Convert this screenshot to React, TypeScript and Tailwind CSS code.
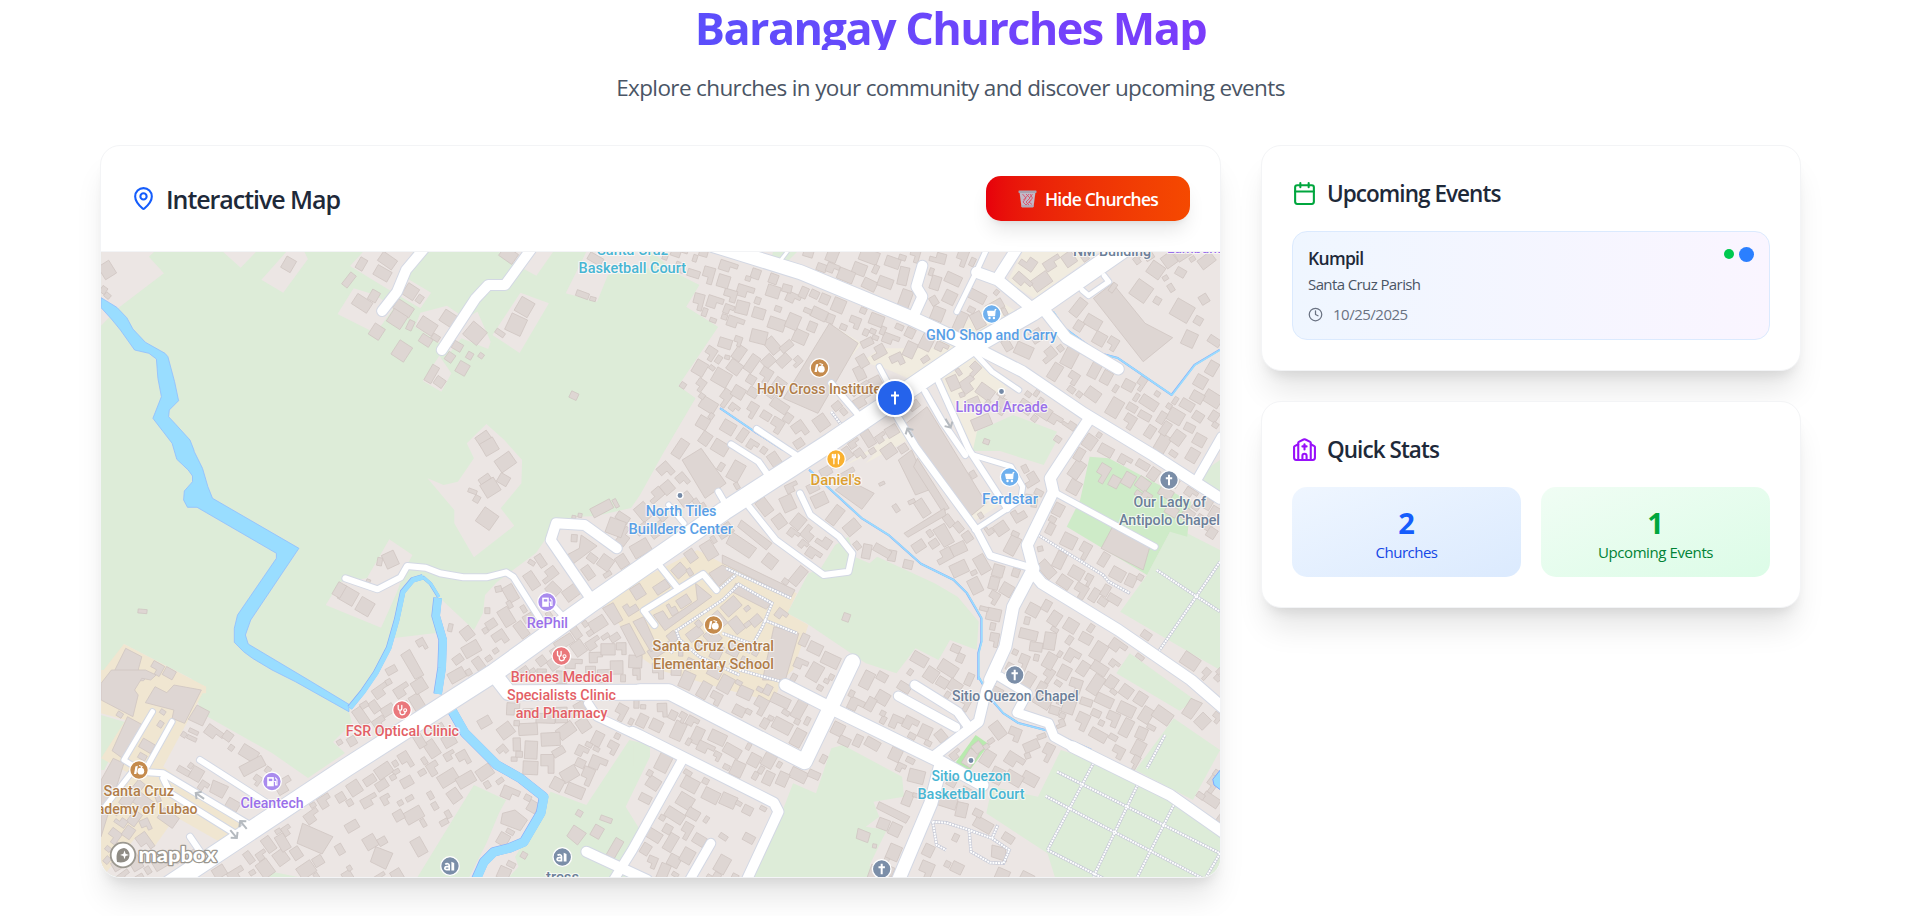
import React from "react";
import { MapPin, Calendar, Clock } from "lucide-react";

type Pt = [number, number];
type Tile = { x: number; y: number; sx: number };

/* Survey sheets: each has an origin and a horizontal scale; the vertical scale is always 3. */
const A: Tile = { x: 90, y: 135, sx: 2.8 };
const B: Tile = { x: 640, y: 135, sx: 2.6133 };
const C: Tile = { x: 90, y: 440, sx: 2.8 };
const D: Tile = { x: 640, y: 440, sx: 2.6133 };
const E: Tile = { x: 90, y: 670, sx: 2.8 };
const F: Tile = { x: 640, y: 670, sx: 2.6133 };
const W: Tile = { x: 0, y: 0, sx: 1 };

const conv = (t: Tile, s: string): Pt[] =>
  s.trim().split(/\s+/).map((p) => {
    const [a, b] = p.split(",").map(Number);
    return t === W ? [a, b] : [t.x + a / t.sx, t.y + b / 3];
  });
const str = (p: Pt[]) => p.map(([x, y]) => x.toFixed(1) + "," + y.toFixed(1)).join(" ");

const mainLand = conv(
  W,
  "560,240 640,240 674,272 699,285 686,307 718,327 678,386 695,398 665,450 640,495 631,508 596,516 574,517 547,537 536,553 513,570 497,582 485,595 483,613 474,630 442,600 436,633 394,638 386,655 372,680 349,712 352,723 333,742 345,753 308,778 272,753 201,713 192,679 124,644 101,700 101,890 1225,890 1225,240"
);

const land: Pt[][] = [
  conv(A, "31,350 180,350 165,365 207,415 80,518 31,572"),
  conv(A, "372,350 422,398 465,350"),
  conv(A, "550,350 600,350 610,372 541,473 480,434"),
  conv(A, "765,350 728,393 830,460 925,520 955,473 880,425 905,350"),
  conv(A, "738,460 693,537 800,595 850,520 800,480"),
  conv(A, "1000,512 925,533 910,575 960,610 1010,650 1040,610 1115,642 1122,620 1085,530 1050,550"),
  conv(A, "1205,473 1285,505 1203,654 1127,600"),
  conv(A, "978,662 1012,715 984,770 932,738"),
  conv(A, "1145,350 1180,382 1250,422 1297,350"),
  conv(A, "1390,350 1568,350 1568,400 1450,420 1420,500 1332,475"),
  conv(C, "1110,-48 1160,0 1210,60 1208,130 1150,205 1188,257 1075,352 1020,250 1020,210 945,115 990,135 1030,125 1075,55 1055,10"),
  conv(C, "838,298 903,345 885,380 860,455 815,563 660,495 700,425 775,415"),
];

const greens: Pt[][] = [
  conv(B, "0,415 90,415 155,450 120,515 203,575 100,752 145,790 65,945 0,945"),
  conv(B, "860,900 975,840 1090,890 1060,948 870,948"),
  conv(B, "350,340 420,340 385,380 345,362"),
  conv(D, "510,315 545,290 560,350 600,370 620,350 770,430 830,470 885,545 880,630 810,600 780,660 720,625 670,700 590,670 435,550 385,520 440,400 470,390"),
  conv(D, "1385,275 1430,280 1516,330 1516,690 1440,640 1255,515 1325,405"),
  conv(D, "1280,640 1450,780 1410,812 1245,700"),
  conv(D, "850,0 1090,0 1055,75"),
  conv(D, "1490,80 1516,60 1516,160 1465,130"),
  conv(E, "1075,345 1165,390 1145,430 1110,520 1060,625 915,625"),
  conv(E, "1290,365 1390,405 1510,210 1568,225 1568,260 1500,410 1540,480 1480,590 1540,625 1170,625 1200,590 1190,560 1220,510 1280,380"),
  conv(E, "510,605 600,625 500,625"),
  conv(E, "31,135 105,158 40,300 31,300"),
  conv(F, "500,235 530,225 685,320 690,380 610,395 625,440 590,470 645,480 600,585 610,625 295,625 380,400 400,340 460,370"),
  conv(F, "1100,240 1180,270 1390,380 1516,490 1516,625 1085,625 1065,550 905,430 920,350 1040,380"),
  conv(F, "1395,145 1516,240 1445,390 1295,300"),
  conv(F, "-18,225 10,225 10,290 -18,310"),
];
const park = conv(D, "1175,50 1225,55 1440,185 1430,290 1385,275 1325,405 1115,260 1150,180");
const court = conv(F, "877,195 912,223 862,300 820,285");

const sand: Pt[][] = [
  conv(C, "95,612 285,718 325,740 325,760 31,760 31,700"),
  conv(E, "31,0 200,0 325,50 205,290 430,470 370,520 240,440 180,530 130,500 31,625 31,400 110,310 31,265 100,150 31,130"),
  conv(D, "-90,490 0,420 150,330 215,370 410,460 385,520 440,555 400,690 370,720 350,785 230,750 50,690 0,650"),
];
const cream: Pt[][] = [
  conv(B, "1000,350 1200,350 1030,490 960,440"),
  conv(B, "630,640 800,640 720,740 640,700 580,680"),
  conv(B, "500,570 580,625 500,740 485,730 565,630"),
  conv(B, "930,490 985,530 760,680 740,660"),
  conv(D, "530,80 690,-40 700,0 590,70 620,30"),
  conv(D, "850,230 950,160 960,180 870,245"),
  conv(B, "790,730 870,660 960,760 900,790 870,945 850,945"),
];

const river: Pt[] = [
  ...conv(A, "31,488 75,517 103,548 120,582 155,622 210,655 218,665 237,740 248,797 222,825 220,845 240,868 280,915 291,945"),
  ...conv(C, "292,35 315,85 330,140 343,175 585,325 450,540 435,585 443,612 612,720"),
  ...conv(E, "725,103 725,125 575,35 510,0"),
  ...conv(C, "455,655 430,635 404,607 404,565 413,525 522,355 522,340 300,202 273,202 262,180 264,153 287,125 287,108 275,90 243,58 230,10"),
  ...conv(A, "230,925 205,890 176,850 200,785 190,730 186,672 165,655 125,645 85,585 60,552 31,518"),
];
const streams: [number, Pt[]][] = [
  [5, conv(W, "350,708 363,692 376,673 389,648 397,620 403,592 413,580 423,577")],
  [3, conv(W, "423,577 431,584 439,597")],
  [8, conv(W, "438,598 436,616 443,640 442,668 438,694")],
  [9, conv(W, "449,705 465,733 497,765 520,778 544,797 541,813 524,842 510,848 494,852 484,862 476,880")],
  [1.6, conv(D, "443,90 580,235 650,285 735,372 820,420 855,460 893,535 893,605 885,640 885,720")],
  [1.6, conv(F, "885,20 920,90 950,130 990,160 1065,182 1180,240")],
  [1.6, conv(B, "210,820 300,890 375,945")],
  [1.6, conv(B, "1080,530 1110,580 1200,655 1250,670 1390,780 1450,690 1516,645")],
];

const roads: [number, Pt[]][] = [
  [10, conv(A, "940,335 885,405 860,470 818,528")],
  [10, conv(A, "1240,335 1162,450 1115,450 1080,490 985,645")],
  [14, conv(B, "190,330 420,412 700,545 860,630")],
  [11, conv(B, "880,640 1000,710 1160,835 1340,960 1516,1090")],
  [3, conv(B, "385,350 370,372")],
  [10, conv(B, "738,392 722,455 738,485 712,550")],
  [5, conv(B, "905,345 875,420 828,530")],
  [11, conv(B, "985,340 935,430")],
  [11, conv(B, "880,412 935,435 1030,525")],
  [11, conv(B, "1060,530 1115,610 1250,702")],
  [5, conv(B, "1155,465 1172,482 1225,440 1213,422")],
  [5, conv(B, "875,655 920,710 990,765")],
  [6, conv(B, "780,740 860,945 960,1122")],
  [7, conv(B, "670,840 720,935 880,1185 915,1262 1020,1298")],
  [5, conv(B, "625,695 660,770")],
  [6, conv(B, "745,770 790,860 850,960")],
  [6, conv(B, "500,745 575,845")],
  [6, conv(B, "305,882 410,962")],
  [6, conv(B, "238,928 310,980 340,1030")],
  [11, conv(B, "1175,850 1072,1030 1080,1070 1012,1230 1028,1300")],
  [12, conv(D, "1028,385 975,500 955,620 915,720")],
  [6, conv(D, "1080,155 1345,320")],
  [11, conv(D, "1025,395 1050,430 1250,570 1440,720 1530,810")],
  [9, conv(D, "1520,-10 1455,120")],
  [5, conv(D, "870,45 970,80 1000,140 995,180 875,270")],
  [6, conv(D, "285,200 355,300 480,405 545,395 555,340 520,290 445,225 418,160")],
  [6, conv(D, "205,155 225,195")],
  [5, conv(D, "75,195 115,250")],
  [6, conv(D, "50,375 95,440")],
  [6, conv(D, "200,450 165,402 10,512 38,555")],
  [6, conv(C, "715,415 805,448 870,412 888,378 940,383 980,400 1045,412 1110,412 1165,397 1185,410 1262,540")],
  [10, conv(C, "1475,325 1385,255 1305,250 1290,300 1405,480")],
  [5, conv(C, "1300,500 1330,535")],
  [15, conv(E, "1130,10 1172,68 1568,67 1621,67")],
  [15, conv(F, "0,65 75,65 430,275 495,120 555,-25")],
  [12, conv(F, "380,45 500,115 790,278 895,345")],
  [8, conv(E, "1395,100 1420,140 1568,215")],
  [10, conv(F, "-20,185 0,196 350,398 362,425 275,640")],
  [9, conv(F, "108,275 -20,540 -80,650")],
  [10, conv(E, "1390,545 1560,630")],
  [9, conv(F, "185,520 125,640")],
  [13, conv(F, "785,290 760,400 672,640")],
  [10, conv(F, "765,262 885,155 905,60 930,0")],
  [9, conv(F, "718,45 830,125 855,165")],
  [9, conv(F, "675,78 825,172")],
  [9, conv(F, "940,20 1012,70 985,128 1068,160 1082,200 1130,230 1200,270")],
  [11, conv(F, "1130,230 1200,270 1385,375 1530,492")],
  [5, conv(E, "175,125 95,270 140,300")],
  [5, conv(E, "230,155 160,290")],
  [5, conv(E, "118,305 31,425")],
  [6, conv(E, "140,305 205,310 440,460")],
  [6, conv(E, "205,325 225,370 408,492")],
  [6, conv(E, "308,270 500,402")],
  [6, conv(E, "280,500 315,555")],
  [18, conv(W, "160,891 347,767 494,673 590,604 724,511 831,442 971,347 1032,312 1140,237")],
];

const paths: Pt[][] = [
  conv(D, "225,385 395,475"),
  conv(D, "205,450 250,405"),
  conv(D, "170,515 95,572 105,605 80,640"),
  conv(D, "105,600 155,650 260,705"),
  conv(D, "170,515 218,478 258,433 345,490 320,560 282,640"),
  conv(D, "215,580 300,615 350,620"),
  conv(D, "325,540 410,580"),
  conv(D, "260,690 370,725"),
  conv(D, "1040,285 1210,405 1225,425 1280,460"),
  conv(D, "1350,390 1455,470 1516,515"),
  conv(D, "1516,365 1355,635"),
  conv(F, "765,455 800,458 860,480 920,505 965,540 950,580 915,578 865,545 860,480"),
  conv(F, "765,455 775,525 800,540"),
  conv(F, "920,505 935,465"),
  conv(F, "1090,305 1516,550"),
  conv(F, "1060,378 1470,625"),
  conv(F, "1065,540 1210,625"),
  conv(F, "1185,280 1065,540"),
  conv(F, "1300,345 1185,620"),
  conv(F, "1395,405 1300,620"),
  conv(F, "1516,550 1480,620"),
  conv(F, "1372,195 1325,295"),
  conv(B, "500,830 530,875"),
];

const bigBuildings: Pt[][] = [
  conv(B, "690,870 750,815 905,1105 862,1145"),
  conv(B, "495,565 570,625 465,835 375,790"),
  conv(B, "1185,490 1235,445 1320,565 1392,608 1315,680"),
  conv(D, "1235,260 1335,310 1315,390 1205,325"),
  conv(D, "110,60 160,25 225,130 170,175"),
  conv(D, "675,60 710,30 755,150 720,165"),
  conv(D, "725,55 808,205 790,215 715,80"),
  conv(D, "690,280 795,205 800,225 700,292"),
  conv(D, "765,270 795,250 822,305 795,322"),
  conv(D, "145,430 188,470 65,572 35,525 60,512 75,538 150,480"),
  conv(D, "215,345 405,450 395,472 215,370"),
  conv(D, "250,430 345,485 330,508 240,455"),
  conv(D, "180,400 215,375 250,395 205,440"),
  conv(D, "350,560 415,580 380,720 320,720"),
  conv(D, "510,150 545,120 612,160 580,208"),
  conv(D, "265,240 345,310 330,330 255,260"),
  conv(D, "240,275 305,325 285,355 225,310"),
  conv(C, "100,625 145,650 135,690 165,700 150,722 55,722"),
  conv(C, "1485,560 1510,550 1555,640 1530,652"),
  conv(C, "1520,545 1550,530 1590,625 1570,635"),
  conv(C, "1435,505 1465,488 1492,540 1468,555"),
  conv(C, "870,645 895,628 935,705 910,718"),
  conv(C, "1375,285 1420,318 1355,370 1335,345 1370,325"),
  conv(E, "60,0 155,0 185,15 170,30 145,25 125,60 135,75 120,140 31,90 31,40"),
  conv(E, "182,50 215,68 235,45 312,60 265,160 230,145 235,120 155,98"),
  conv(E, "105,140 148,165 95,268 62,242"),
  conv(E, "65,265 95,280 31,500 31,330"),
  conv(E, "595,460 680,500 650,552 580,520"),
  conv(E, "300,105 335,125 315,168 275,148"),
  conv(E, "345,330 388,350 370,385 335,365"),
  conv(E, "800,530 848,550 828,598 785,575"),
  conv(E, "1155,430 1190,420 1225,450 1205,482 1150,460"),
  conv(E, "1355,465 1390,490 1365,525 1335,498"),
  conv(F, "625,395 705,440 695,460 618,415"),
  conv(F, "570,475 602,490 595,518 565,505"),
  conv(F, "920,525 955,535 958,575 918,560"),
  conv(F, "1440,85 1470,100 1440,148 1415,130"),
];

/* [sheet, cx, cy, width, height, rotation] */
const lots: [Tile, number, number, number, number, number][] = [
  [A, 48, 405, 13, 15, -32], [A, 38, 465, 6, 7, 35], [A, 49, 482, 6, 5, 40], [A, 556, 388, 11, 13, 30],
  [A, 760, 387, 8, 12, 30], [A, 833, 377, 17, 11, 35], [A, 819, 415, 16, 11, 30], [A, 725, 435, 7, 15, 38],
  [A, 762, 505, 18, 12, 33], [A, 795, 483, 9, 11, 30], [A, 898, 470, 13, 13, 33], [A, 923, 492, 6, 8, 35],
  [A, 878, 520, 19, 11, 33], [A, 860, 552, 16, 15, 33], [A, 897, 571, 6, 10, 25], [A, 803, 590, 12, 13, 33],
  [A, 944, 573, 18, 13, 33], [A, 940, 616, 12, 9, 33], [A, 968, 608, 8, 6, 33], [A, 1003, 550, 14, 13, 33],
  [A, 873, 648, 15, 17, 33], [A, 1029, 634, 10, 8, 30], [A, 1008, 667, 8, 9, 35], [A, 1063, 662, 6, 7, 30],
  [A, 1095, 662, 5, 5, 35], [A, 1078, 595, 18, 17, 40], [A, 1043, 700, 11, 12, 30], [A, 1217, 516, 15, 16, 30],
  [A, 1193, 569, 17, 18, 25], [A, 1148, 594, 10, 5, 35], [A, 957, 717, 8, 18, 30], [A, 979, 741, 10, 9, 35],
  [A, 1355, 782, 8, 7, 25], [A, 1103, 912, 14, 12, -35], [A, 1172, 360, 16, 12, 35], [A, 1415, 372, 15, 8, 30],
  [A, 1379, 479, 13, 6, 20], [A, 1408, 492, 6, 4, 15],
  [C, 1118, 20, 15, 14, -30], [C, 1163, 66, 18, 14, -35], [C, 1158, 119, 11, 10, 30], [C, 1105, 117, 12, 6, -35],
  [C, 1121, 143, 16, 15, -32], [C, 1083, 177, 6, 7, 30], [C, 1071, 154, 9, 4, 20], [C, 1112, 236, 17, 17, 35],
  [C, 841, 359, 13, 15, -25], [C, 811, 365, 5, 8, 10], [C, 723, 467, 17, 15, 30], [C, 698, 450, 9, 14, 30],
  [C, 770, 500, 15, 15, 30], [C, 779, 424, 4, 4, 20], [C, 147, 514, 9, 4, 5],
  [C, 1433, 205, 22, 10, -28], [C, 1472, 190, 4, 9, -28], [C, 1355, 231, 4, 3, 10], [C, 1372, 226, 4, 4, 10],
  [C, 1472, 262, 17, 16, 20], [C, 1542, 325, 19, 14, -30],
  [D, 539, 532, 7, 8, 20], [D, 633, 332, 18, 8, 30], [D, 906, 5, 5, 4, 20],
  [D, 710, 185, 7, 4, -25], [D, 632, 131, 6, 3, -25], [D, 650, 33, 14, 12, -35],
  [F, 613, 528, 4, 4, 10], [B, 1348, 405, 15, 14, 35], [B, 1310, 468, 18, 18, 35], [B, 1417, 527, 20, 18, 30],
  [B, 1436, 612, 13, 15, 25], [B, 1352, 497, 7, 7, 30], [B, 1459, 557, 8, 8, 30], [B, 1236, 458, 5, 10, 35],
  [B, 1413, 412, 10, 8, 30], [B, 1495, 700, 10, 14, 30], [B, 1465, 740, 12, 12, 30],
  [B, 905, 920, 6, 5, 20], [B, 228, 667, 5, 4, 15], [B, 213, 728, 17, 15, 30],
  [E, 290, 185, 10, 4, 25], [E, 285, 205, 10, 4, 25], [E, 445, 250, 18, 12, 32], [E, 455, 288, 25, 11, -28],
  [E, 298, 312, 12, 13, 30], [E, 262, 303, 13, 6, 30], [E, 400, 404, 13, 10, 30], [E, 1157, 508, 11, 12, 30],
  [E, 1240, 410, 10, 11, 30], [E, 1215, 556, 6, 6, 30], [E, 1370, 430, 6, 6, 30], [E, 1420, 485, 10, 12, 30],
  [E, 1470, 535, 9, 20, 30], [E, 1445, 448, 12, 5, 20],
];
const lotPoly = ([t, px, py, w, h, r]: (typeof lots)[number]): Pt[] => {
  const x = t.x + px / t.sx;
  const y = t.y + py / 3;
  return rect(x, y, w, h, (r * Math.PI) / 180);
};
function rect(x: number, y: number, w: number, h: number, a: number): Pt[] {
  const c = Math.cos(a);
  const s = Math.sin(a);
  return ([[-w, -h], [w, -h], [w, h], [-w, h]] as Pt[]).map(([u, v]) => [x + (u * c - v * s) / 2, y + (u * s + v * c) / 2]);
}
function inside([x, y]: Pt, poly: Pt[]) {
  let r = false;
  for (let i = 0, j = poly.length - 1; i < poly.length; j = i++) {
    const [xi, yi] = poly[i];
    const [xj, yj] = poly[j];
    if (yi > y !== yj > y && x < ((xj - xi) * (y - yi)) / (yj - yi) + xi) r = !r;
  }
  return r;
}
function segDist(p: Pt, a: Pt, b: Pt) {
  const dx = b[0] - a[0];
  const dy = b[1] - a[1];
  const t = Math.max(0, Math.min(1, ((p[0] - a[0]) * dx + (p[1] - a[1]) * dy) / (dx * dx + dy * dy || 1)));
  return Math.hypot(p[0] - a[0] - t * dx, p[1] - a[1] - t * dy);
}

/* Fills the built-up land with small houses that face the nearest street. */
function houses(): Pt[][] {
  let seed = 77123;
  const rnd = () => {
    seed = (seed * 1664525 + 1013904223) >>> 0;
    return seed / 4294967296;
  };
  const segs: { a: Pt; b: Pt; w: number; ang: number; dir: boolean }[] = [];
  const add = (w: number, p: Pt[], dir: boolean) => {
    for (let i = 1; i < p.length; i++)
      segs.push({ a: p[i - 1], b: p[i], w, dir, ang: Math.atan2(p[i][1] - p[i - 1][1], p[i][0] - p[i - 1][0]) });
  };
  roads.forEach(([w, p]) => add(w, p, true));
  streams.forEach(([w, p]) => add(w + 3, p, false));
  paths.forEach((p) => add(3, p, false));
  const solid = [...bigBuildings, ...lots.map(lotPoly)];
  const placed: Pt[][] = [];
  const centres: [number, number, number][] = [];
  const hollow: Pt[][] = [
    conv(D, "560,180 700,100 760,300 830,400 760,390 620,330 560,290"),
    conv(D, "440,100 540,60 640,20 700,60 690,280 600,270 560,210"),
    conv(D, "870,60 990,80 1010,180 900,240"),
    conv(D, "350,330 480,410 440,450 330,400"),
    conv(E, "240,150 420,180 600,330 440,420 300,280 200,280"),
    conv(E, "640,410 1000,300 1000,600 640,620"),
    conv(E, "1040,130 1140,240 1140,130 1200,50 1140,50"),
    conv(F, "130,400 350,430 260,620 170,520"),
    conv(B, "1250,380 1516,380 1516,640 1390,760 1240,640"),
    conv(F, "800,430 1060,560 1080,620 760,620"),
    conv(C, "780,580 960,600 960,720 700,720"),
    conv(E, "130,290 430,480 370,520 180,530"),
  ];
  for (let n = 0; n < 26000; n++) {
    const k = n / 26000;
    const p: Pt = [101 + rnd() * 1119, 252 + rnd() * 626];
    const base = k < 0.35 ? 13.5 : k < 0.7 ? 10 : 6;
    const w = base * (0.85 + rnd() * 0.6);
    const h = base * (0.7 + rnd() * 0.3);
    const turn = rnd() < 0.5;
    const notch = rnd();
    const thin = rnd();
    if (!inside(p, mainLand)) continue;
    if (base === 6 && thin < 0.5) continue;
    if (hollow.some((q) => inside(p, q)) && thin < 0.95) continue;
    let near = 1e9;
    let ang = -0.6;
    let hit = false;
    for (const s of segs) {
      const d = segDist(p, s.a, s.b) - s.w / 2;
      if (d < h / 2 + 1.5) { hit = true; break; }
      if (s.dir && d < near) { near = d; ang = s.ang; }
    }
    if (hit) continue;
    const poly = rect(p[0], p[1], w, h, ang + (turn ? Math.PI / 2 : 0) + (thin - 0.5) * 0.12);
    if (greens.some((g) => inside(p, g) || poly.some((c) => inside(c, g)))) continue;
    if (poly.some((c) => inside(c, park)) && segDist(p, [1098, 464], [1185, 512]) > 9) continue;
    if (!poly.every((c) => inside(c, mainLand))) continue;
    if (solid.some((g) => inside(p, g) || poly.some((c) => inside(c, g)))) continue;
    const r = Math.sqrt(w * h) / 2;
    if (centres.some(([x, y, q]) => Math.hypot(x - p[0], y - p[1]) < (q + r) * 1.12)) continue;
    centres.push([p[0], p[1], r]);
    if (notch < 0.3 && base > 9) {
      const [a, b, c, d] = poly;
      const m = (u: Pt, v: Pt, t: number): Pt => [u[0] + (v[0] - u[0]) * t, u[1] + (v[1] - u[1]) * t];
      const bc = m(b, c, 0.45);
      const cd = m(c, d, 0.4);
      placed.push([a, b, bc, [bc[0] + cd[0] - c[0], bc[1] + cd[1] - c[1]], cd, d]);
    } else placed.push(poly);
  }
  return placed;
}
const allBuildings = [...houses(), ...bigBuildings, ...lots.map(lotPoly)];

const BLUE = "#5a9fe6";
const BROWN = "#b07d49";
const PURPLE = "#9a70ea";
const SLATE = "#6c7f99";
const RED = "#e35f66";
const TEAL = "#48b5d3";

/* [text, left, right, baseline, colour] */
const labels: [string, number, number, number, string][] = [
  ["Santa Cruz", 597, 668, 255, TEAL],
  ["Basketball Court", 578.6, 686, 273, TEAL],
  ["NM Building", 1073, 1151, 256, SLATE],
  ["Lambunao", 1167, 1232, 253, PURPLE],
  ["GNO Shop and Carry", 926, 1057, 340, BLUE],
  ["Holy Cross Institute", 757, 881, 394, BROWN],
  ["Lingod Arcade", 955.5, 1047.5, 412, PURPLE],
  ["Daniel's", 810.5, 861.5, 485, "#dc9f31"],
  ["Ferdstar", 982, 1038, 503.5, BLUE],
  ["Our Lady of", 1133.5, 1206, 506.5, SLATE],
  ["Antipolo Chapel", 1119, 1220, 524.5, SLATE],
  ["North Tiles", 645.7, 716.5, 516, BLUE],
  ["Buillders Center", 628.6, 733, 534, BLUE],
  ["Santa Cruz Central", 652.6, 774, 650.5, BROWN],
  ["Elementary School", 653, 774, 668.5, BROWN],
  ["RePhil", 526.8, 568, 627.7, PURPLE],
  ["Briones Medical", 510.7, 613, 682, RED],
  ["Specialists Clinic", 507, 616, 700, RED],
  ["and Pharmacy", 515.7, 607.5, 718, RED],
  ["FSR Optical Clinic", 345.7, 459, 736, RED],
  ["Cleantech", 240.4, 303.6, 807.5, PURPLE],
  ["Santa Cruz", 103.6, 174, 795.7, BROWN],
  ["Academy of Lubao", 80, 197.5, 813.7, BROWN],
  ["Sitio Quezon Chapel", 952, 1078.6, 701, SLATE],
  ["Sitio Quezon", 931.6, 1010.5, 781, TEAL],
  ["Basketball Court", 917.5, 1024.6, 799, TEAL],
  ["tress", 546, 579, 882, SLATE],
];

const glyphs: Record<string, React.ReactNode> = {
  cart: <><path d="M4.6 -4.8 L3.4 -4.2 L2.9 1.6 H-3.2 L-4 -2.6 H3" fill="#fff" stroke="#fff" strokeWidth="1.2" strokeLinejoin="round" /><circle cx="-2.2" cy="4" r="1.2" fill="#fff" /><circle cx="2.2" cy="4" r="1.2" fill="#fff" /></>,
  school: <><path d="M-5 4 L-3.6 -3.6 L-1.2 -4.2 L-2.6 4 Z" fill="#fff" /><circle cx="1.8" cy="1.2" r="3.4" fill="#fff" /><path d="M0 -4.5 L3 -3.5 L2 -1.5" stroke="#fff" strokeWidth="1.2" fill="none" /></>,
  food: <path d="M-3.6 -4.5 V-1.5 H-0.6 V-4.5 M-2.1 -4.5 V4.8 M2.4 4.8 V-4.5 C3.8 -3.5 3.8 0 2.6 0.6" stroke="#fff" strokeWidth="1.3" fill="none" strokeLinecap="round" />,
  cross: <path d="M0 -5.2 V5.2 M-3.2 -1.8 H3.2" stroke="#fff" strokeWidth="2" fill="none" />,
  fuel: <><path d="M-4.8 4.8 V-4.4 H1.8 V4.8 Z" fill="#fff" /><path d="M-3.2 -2.8 H0.3 V-0.4 H-3.2 Z" fill="#a98bee" /><path d="M2.2 0 H3.6 V3.4 H5 V-1.8 L3.2 -3.8" stroke="#fff" strokeWidth="1.1" fill="none" /></>,
  doctor: <><path d="M-3.8 -4.6 V-1.8 C-3.8 1 -0.2 1 -0.2 -1.8 V-4.6 M-2 0.4 V2.2 C-2 5.8 3.2 5.6 3.2 1.4" stroke="#fff" strokeWidth="1.3" fill="none" strokeLinecap="round" /><circle cx="3.2" cy="0.2" r="1.5" fill="none" stroke="#fff" strokeWidth="1.1" /></>,
  town: <><path d="M-4.8 -1.6 C-3 -3 -0.8 -2.4 -0.8 -0.400 V3.600 H-3.400 C-6 3.600 -5.600 0.600 -3.200 0.600 H-1.400" fill="none" stroke="#fff" strokeWidth="1.700" /><path d="M1.400 4.400 V-4.200 L4.200 -3 V4.400 Z" fill="#fff" /></>,
};
const pois: [string, number, number, string][] = [
  ["cart", 991.7, 314, "#6fb0ee"], ["school", 819.5, 368, "#c58b4d"], ["food", 836, 459, "#fab12f"],
  ["cart", 1009.7, 477, "#6fb0ee"], ["cross", 1169, 480, "#7b8ea8"], ["fuel", 547, 602, "#a98bee"],
  ["doctor", 561.3, 656, "#ea777b"], ["school", 713.5, 625, "#c58b4d"], ["cross", 1014.7, 675, "#7b8ea8"],
  ["doctor", 402, 710, "#ea777b"], ["fuel", 272, 781.5, "#a98bee"], ["school", 139, 770, "#c58b4d"],
  ["town", 450, 866, "#7b8ea8"], ["town", 562.3, 857, "#7b8ea8"], ["cross", 881.7, 869, "#7b8ea8"],
];
const arrows: [number, number, number][] = [[200, 796, -145], [243.5, 825, -130], [233.5, 834, 50], [910, 433, -120], [948, 423, 60]];

function CityMap() {
  return (
    <svg viewBox="101 252 1119 625" className="block h-[625px] w-full" preserveAspectRatio="none" aria-label="Map">
      <rect x="101" y="252" width="1120" height="626" fill="#ddecd8" />
      <polygon points={str(mainLand)} fill="#ece6e4" />
      {land.map((p, i) => <polygon key={i} points={str(p)} fill="#ece6e4" />)}
      {greens.map((p, i) => <polygon key={i} points={str(p)} fill="#ddecd8" />)}
      <polygon points={str(park)} fill="#ceebc8" />
      <polygon points={str(court)} fill="#b8eaae" />
      {sand.map((p, i) => <polygon key={i} points={str(p)} fill="#f0e6d1" />)}
      {cream.map((p, i) => <polygon key={i} points={str(p)} fill="#f1ece0" />)}
      <g fill="#ded6d3" stroke="#cfc5c1" strokeWidth="0.8">
        {allBuildings.map((p, i) => <polygon key={i} points={str(p)} />)}
      </g>
      <polygon points={str(river)} fill="#99ddff" stroke="#8fbcff" strokeWidth="0.8" />
      <polygon points={str(conv(F, "1520,295 1497,328 1500,345 1520,362"))} fill="#99ddff" stroke="#7fa8ff" />
      {streams.map(([w, p], i) => <polyline key={i} points={str(p)} fill="none" stroke="#86adfb" strokeWidth={w + 0.5} transform="translate(-0.4 -0.2)" strokeLinejoin="round" />)}
      {streams.map(([w, p], i) => <polyline key={i} points={str(p)} fill="none" stroke="#99ddff" strokeWidth={w} strokeLinejoin="round" />)}
      <g fill="none" stroke="#c6c9d6" strokeWidth="3.2">
        {paths.map((p, i) => <polyline key={i} points={str(p)} />)}
      </g>
      <g fill="none" stroke="#ffffff" strokeWidth="2" strokeDasharray="2 0.8">
        {paths.map((p, i) => <polyline key={i} points={str(p)} />)}
      </g>
      <g fill="none" stroke="#d3d8e4" strokeLinecap="round" strokeLinejoin="round">
        {roads.map(([w, p], i) => <polyline key={i} points={str(p)} strokeWidth={w + 2} />)}
      </g>
      <g fill="none" stroke="#ffffff" strokeLinecap="round" strokeLinejoin="round">
        {roads.map(([w, p], i) => <polyline key={i} points={str(p)} strokeWidth={w} />)}
      </g>
      {arrows.map(([x, y, r], i) => (
        <path key={i} d="M-5 0 H5 M1 -4.5 L5.2 0 L1 4.5" transform={`translate(${x} ${y}) rotate(${r})`} fill="none" stroke="#b5babf" strokeWidth="2" />
      ))}
      {[[680, 495.5], [1001.5, 391.5], [971, 760.5]].map(([x, y], i) => (
        <circle key={i} cx={x} cy={y} r="3.1" fill="#7489a6" stroke="#fff" strokeWidth="1.4" />
      ))}
      {pois.map(([g, x, y, c], i) => (
        <g key={i} transform={`translate(${x} ${y})`}>
          <circle r="9.3" fill={c} stroke="#fff" strokeWidth="1.3" />
          {glyphs[g]}
        </g>
      ))}
      <g fontFamily="Roboto, 'Liberation Sans', sans-serif" fontWeight="500" fontSize="14" stroke="#ffffff" strokeOpacity="0.7" strokeWidth="2.2" paintOrder="stroke" strokeLinejoin="round">
        {labels.map(([t, l, r, y, c], i) => (
          <text key={i} x={l} y={y} textLength={r - l} lengthAdjust="spacingAndGlyphs" fill={c}>{t}</text>
        ))}
      </g>
      <circle cx="123" cy="855" r="12.3" fill="#fff" stroke="#9b9890" strokeWidth="1.8" />
      <path d="M117 862 C115.500 853 118 848.500 124 848 A6.800 6.800 0 0 1 129.500 855 C129.500 861 124 863.500 117 862 Z" fill="#8f8c85" />
      <path d="M124.500 850.500 L125.600 853.800 L128.900 854.900 L125.600 856 L124.500 859.300 L123.400 856 L120.100 854.900 L123.400 853.800 Z" fill="#fff" />
      <text x="138.500" y="861.500" textLength="78" lengthAdjust="spacingAndGlyphs" fontFamily="Lato, sans-serif" fontWeight="900" fontSize="21" fill="#fff" stroke="#9b978f" strokeWidth="2.600" paintOrder="stroke" strokeLinejoin="round">mapbox</text>
    </svg>
  );
}

function ChurchIcon() {
  return (
    <svg className="size-[25px] text-[#9810fa]" viewBox="0 0 24 24" fill="none" stroke="currentColor" strokeWidth="2" strokeLinecap="round" strokeLinejoin="round">
      <path d="M10 9h4" />
      <path d="M12 7v5" />
      <path d="M14 22v-4a2 2 0 0 0-4 0v4" />
      <path d="M18 22V5.618a1 1 0 0 0-.553-.894l-4.553-2.277a2 2 0 0 0-1.788 0L6.553 4.724A1 1 0 0 0 6 5.618V22" />
      <path d="m18 7 3.447 1.724a1 1 0 0 1 .553.894V20a2 2 0 0 1-2 2H4a2 2 0 0 1-2-2V9.618a1 1 0 0 1 .553-.894L6 7" />
    </svg>
  );
}

function Bin() {
  return (
    <svg className="h-[18px] w-[19px]" viewBox="0 0 19 18">
      <path d="M1.500 2 L3.500 17 H15.500 L17.500 2 Z" fill="#c3b8c6" />
      <path d="M4.500 4 L8 8 L5 12 L8 15 M8 4 L12 8 L8 12 L11 15 M12 4 L14.500 8 L11 12 L14 14.500 M14.500 4 L11.500 8 M11 4 L5.500 10 M13.500 10 L8 15" stroke="#d8506a" strokeWidth="0.900" fill="none" />
      <rect x="0.500" y="0.500" width="18" height="2.400" rx="0.600" fill="#a9a2b0" />
      <rect x="3.600" y="15" width="11.800" height="2.400" rx="0.600" fill="#b3a9b8" />
    </svg>
  );
}

const card = "rounded-[20px] border border-gray-100 bg-white shadow-[0_25px_31px_-6px_rgba(0,0,0,0.1),0_10px_12.5px_-7.5px_rgba(0,0,0,0.1)]";

export default function App() {
  return (
    <div className="h-[916px] w-full overflow-hidden bg-white font-['Open_Sans','Noto_Sans',sans-serif]">
      <header className="flex flex-col items-center pr-[4px]">
        <h1 className="h-[50px] w-[1700px] bg-linear-to-r from-[#155dfc] to-[#9810fa] bg-clip-text text-center text-[45px] leading-[50px] font-bold text-transparent">
          <span className="inline-block h-[50px] pt-[3px] tracking-[-1.56px]">Barangay Churches Map</span>
        </h1>
        <p className="mt-[20px] text-[22.5px] leading-[36px] tracking-[-0.63px] whitespace-nowrap text-gray-600">
          Explore churches in your community and discover upcoming events
        </p>
      </header>

      <main className="mt-[39px] ml-[100px] flex items-start gap-[40px]">
        <section className={`w-[1121px] overflow-hidden ${card}`}>
          <div className="flex h-[106px] items-center justify-between border-b border-gray-100 pr-[30px] pl-[30px]">
            <div className="flex items-center gap-[10px]">
              <MapPin className="size-[25px] text-[#155dfc]" />
              <h2 className="pt-[2px] text-[25px] leading-[35px] font-semibold tracking-[-1.05px] text-gray-800">Interactive Map</h2>
            </div>
            <button className="flex h-[45px] w-[204px] items-center justify-center gap-[8px] rounded-[15px] bg-linear-to-r from-[#e7000b] to-[#f54900] text-[17.5px] font-semibold tracking-[-0.75px] whitespace-nowrap text-white shadow-[0_12.5px_18.75px_-3.75px_rgba(0,0,0,0.1),0_5px_7.5px_-5px_rgba(0,0,0,0.1)]">
              <Bin />
              <span className="pt-[1px]">Hide Churches</span>
            </button>
          </div>
          <div className="relative h-[625px]">
            <CityMap />
            <div className="absolute top-[127px] left-[775px] flex size-[38px] items-center justify-center rounded-full border-[2.5px] border-white bg-[#2563eb] shadow-[0_4px_12px_rgba(0,0,0,0.35)]">
              <svg className="h-[16px] w-[12px]" viewBox="0 0 12 16">
                <path d="M6 1.5 V14.5 M2 5.500 H10" stroke="#fff" strokeWidth="2" fill="none" />
              </svg>
            </div>
          </div>
        </section>

        <aside className="flex w-[540px] flex-col gap-[30px]">
          <section className={`h-[226px] px-[30px] pt-[30px] ${card}`}>
            <div className="flex h-[35px] items-center gap-[10px]">
              <Calendar className="size-[25px] text-[#00a63e]" />
              <h2 className="text-[22.5px] leading-[35px] font-semibold tracking-[-0.95px] text-gray-800">Upcoming Events</h2>
            </div>
            <div className="mt-[20px] flex h-[109px] justify-between rounded-[15px] border border-[#dbeafe] bg-linear-to-r from-[#eff6ff] to-[#faf5ff] px-[15px] pt-[13px]">
              <div>
                <h3 className="pt-[1px] text-[17.5px] leading-[25px] font-semibold tracking-[-0.7px] text-gray-800">Kumpil</h3>
                <p className="mt-[1px] text-[15px] leading-[24px] tracking-[-0.6px] text-gray-600">Santa Cruz Parish</p>
                <div className="mt-[6px] flex items-center gap-[10px] text-gray-500">
                  <Clock className="size-[15px]" />
                  <span className="text-[15px] leading-[24px] tracking-[-0.5px]">10/25/2025</span>
                </div>
              </div>
              <div className="flex h-[18px] items-center gap-[5px]">
                <span className="size-[10px] rounded-full bg-[#00c950]" />
                <span className="size-[15px] rounded-full bg-[#2b7fff]" />
              </div>
            </div>
          </section>

          <section className={`h-[207px] px-[30px] pt-[30px] ${card}`}>
            <div className="flex h-[35px] items-center gap-[10px]">
              <ChurchIcon />
              <h2 className="text-[22.5px] leading-[35px] font-semibold tracking-[-0.95px] text-gray-800">Quick Stats</h2>
            </div>
            <div className="mt-[20px] grid grid-cols-2 gap-[20px] text-center">
              <div className="h-[90px] rounded-[15px] bg-linear-to-br from-[#eff6ff] to-[#dbeafe] pt-[17px]">
                <div className="text-[29px] leading-[38px] font-bold text-[#155dfc]">2</div>
                <div className="text-[15px] leading-[20px] tracking-[-0.5px] text-[#1447e6]">Churches</div>
              </div>
              <div className="h-[90px] rounded-[15px] bg-linear-to-br from-[#f0fdf4] to-[#dcfce7] pt-[17px]">
                <div className="text-[29px] leading-[38px] font-bold text-[#00a63e]">1</div>
                <div className="text-[15px] leading-[20px] tracking-[-0.4px] text-[#008236]">Upcoming Events</div>
              </div>
            </div>
          </section>
        </aside>
      </main>
    </div>
  );
}
